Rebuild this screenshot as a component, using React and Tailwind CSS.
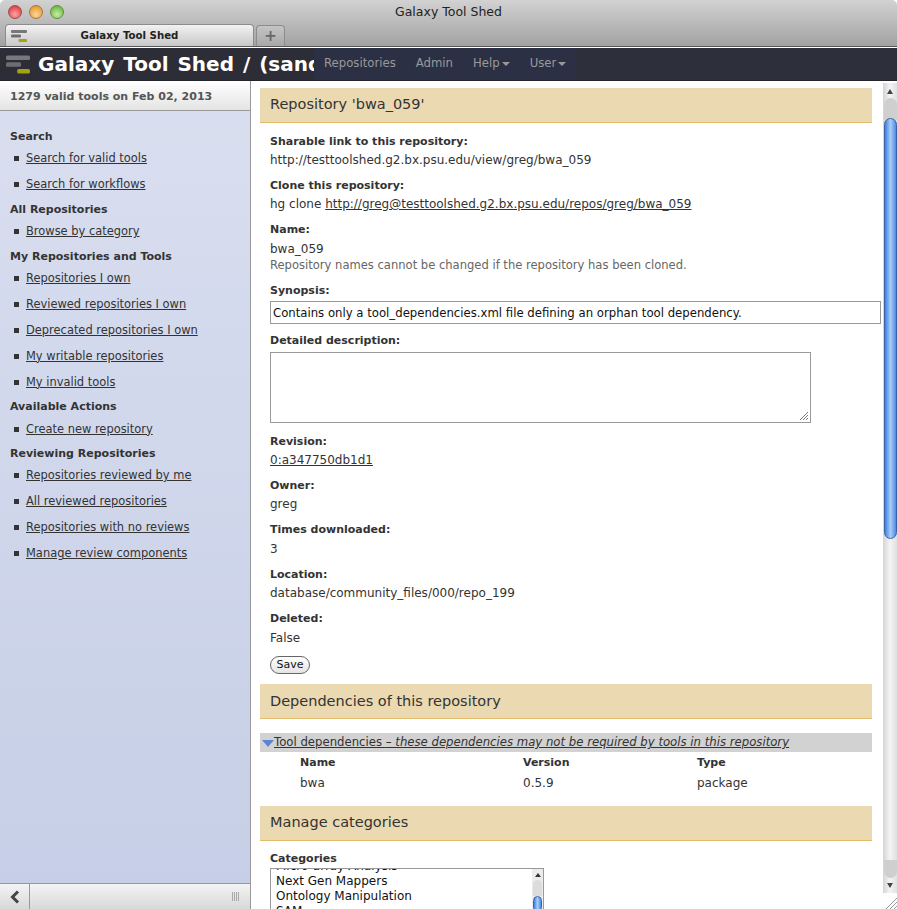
import React from "react";

const sections = [
  { title: "Search", links: ["Search for valid tools", "Search for workflows"] },
  { title: "All Repositories", links: ["Browse by category"] },
  {
    title: "My Repositories and Tools",
    links: [
      "Repositories I own",
      "Reviewed repositories I own",
      "Deprecated repositories I own",
      "My writable repositories",
      "My invalid tools",
    ],
  },
  { title: "Available Actions", links: ["Create new repository"] },
  {
    title: "Reviewing Repositories",
    links: [
      "Repositories reviewed by me",
      "All reviewed repositories",
      "Repositories with no reviews",
      "Manage review components",
    ],
  },
];

// galaxy logo: two grey bars and the small yellow one
const Logo = ({ w, h }) => (
  <svg width={w} height={h} viewBox="0 0 32 26">
    <rect x="0" y="1" width="32" height="6" rx="2" fill="#77777c" />
    <rect x="0" y="10" width="20" height="6" rx="2" fill="#6e6e72" />
    <rect x="15" y="19" width="17" height="6" rx="2" fill="#a3a312" />
  </svg>
);

const Light = ({ className }) => (
  <span className={`w-[14px] h-[14px] rounded-full border ${className}`} />
);

const Field = ({ label, children, className = "" }) => (
  <div className={`px-[10px] ${className}`}>
    <div className="font-bold text-[11px] leading-[18px] text-[#333]">{label}</div>
    {children}
  </div>
);

const SectionTitle = ({ children, className = "" }) => (
  <div
    className={`h-[35px] pl-[10px] flex items-center bg-[#ebd9b2] border-b border-[#e3bb6a] text-[14.5px] text-[#333] ${className}`}
  >
    {children}
  </div>
);

const Thumb = ({ className }) => (
  <div
    className={`rounded-full border border-[#3a62a8] bg-gradient-to-r from-[#3f7fe0] via-[#a9cdf7] to-[#4b8be4] ${className}`}
  />
);

export default function App() {
  return (
    <div
      className="w-[897px] h-[909px] overflow-hidden flex flex-col text-[12px] text-[#333] bg-white"
      style={{ fontFamily: '"DejaVu Sans", sans-serif' }}
    >
      {/* browser chrome, white line under it */}
      <div className="h-[48px] shrink-0 bg-white">
        <div className="h-[47px] flex flex-col rounded-t-[5px] bg-gradient-to-b from-[#d2d2d2] to-[#a2a2a2] border-b border-b-[#55555a]">
          <div className="h-[24px] relative flex items-center pl-[8px] gap-[7px]">
            <Light className="border-[#a04a4a] bg-[radial-gradient(circle_at_50%_70%,#f7a5a5,#d8282c)]" />
            <Light className="border-[#a07a40] bg-[radial-gradient(circle_at_50%_70%,#f9d79a,#e58a14)]" />
            <Light className="border-[#5f9040] bg-[radial-gradient(circle_at_50%_70%,#c9eba6,#5aae28)]" />
            <div className="absolute inset-0 flex items-center justify-center text-[12.5px] text-[#222]">
              Galaxy Tool Shed
            </div>
          </div>
          <div className="h-[22px] flex items-end pl-[5px] gap-[2px]">
            <div className="w-[249px] h-[22px] relative flex items-center justify-center rounded-t-[4px] border border-b-0 border-[#8c8c8c] bg-gradient-to-b from-[#f2f2f2] to-[#c8c8c8] text-[10.2px] font-bold text-[#222]">
              <span className="absolute left-[5px] top-[4px]">
                <Logo w={16} h={14} />
              </span>
              Galaxy Tool Shed
            </div>
            <div className="w-[29px] h-[21px] flex items-center justify-center rounded-t-[4px] border border-b-0 border-[#8c8c8c] bg-gradient-to-b from-[#c4c4c4] to-[#a8a8a8] text-[15px] font-bold leading-none text-[#666]">
              +
            </div>
          </div>
        </div>
      </div>

      {/* masthead */}
      <div className="h-[33px] shrink-0 flex bg-[#2d303a] border-b border-[#23252c]">
        <div className="w-[314px] shrink-0 flex items-center pl-[6px] gap-[8px] overflow-hidden bg-[#2c2d36]">
          <span className="shrink-0 flex">
            <Logo w={24} h={21} />
          </span>
          <span className="whitespace-nowrap font-bold text-[20px] text-white [word-spacing:2px]">
            Galaxy Tool Shed / (sandbox)
          </span>
        </div>
        <nav className="w-[262px] shrink-0 flex items-center pl-[10px] gap-[20px] bg-[#2c3044] text-[11.7px] text-[#9a9a9a]">
          <span>Repositories</span>
          <span>Admin</span>
          <span className="flex items-center gap-[2px]">
            Help
            <span className="border-x-[4px] border-x-transparent border-t-[4px] border-t-[#9a9a9a]" />
          </span>
          <span className="flex items-center gap-[2px]">
            User
            <span className="border-x-[4px] border-x-transparent border-t-[4px] border-t-[#9a9a9a]" />
          </span>
        </nav>
      </div>

      <div className="flex-1 min-h-0 flex">
        {/* left panel */}
        <aside className="w-[251px] shrink-0 flex flex-col border-r border-[#999]">
          <div className="h-[30px] shrink-0 flex items-center pl-[10px] pt-[3px] font-bold text-[11px] text-[#555] border-b border-[#999] bg-gradient-to-b from-white to-[#e4e4e4]">
            1279 valid tools on Feb 02, 2013
          </div>
          <div className="flex-1 min-h-0 pl-[10px] pt-[17px] bg-gradient-to-b from-[#d9deef] to-[#c6cfe7]">
            {sections.map((s) => (
              <div key={s.title} className="mb-[7px]">
                <div className="font-bold text-[11px] leading-[18px] mb-[3.8px]">{s.title}</div>
                <ul>
                  {s.links.map((l) => (
                    <li key={l} className="flex items-center h-[18px] mb-[8px] last:mb-0 pl-[4px] text-[11.45px]">
                      <span className="w-[5px] h-[5px] bg-[#333] mr-[7px]" />
                      <a className="underline">{l}</a>
                    </li>
                  ))}
                </ul>
              </div>
            ))}
          </div>
          <div className="h-[26px] shrink-0 flex border-t border-[#999] bg-gradient-to-b from-[#f4f4f4] to-[#d8d8d8]">
            <div className="w-[30px] flex items-center justify-center border-r border-[#999]">
              <svg width="10" height="14" viewBox="0 0 10 14">
                <path d="M8 1.5 2.5 7 8 12.5" fill="none" stroke="#444" strokeWidth="3" />
              </svg>
            </div>
            <div className="flex-1 flex items-center justify-end pr-[11px]">
              <span className="w-[7px] h-[9px] bg-[repeating-linear-gradient(90deg,#aaa_0,#aaa_1px,transparent_1px,transparent_2px)]" />
            </div>
          </div>
        </aside>

        {/* center panel */}
        <main className="flex-1 min-w-0 overflow-hidden pl-[9px] pr-[11px] pt-[7px]">
          <SectionTitle>Repository 'bwa_059'</SectionTitle>
          <Field label="Sharable link to this repository:" className="mt-[10px]">
            <div className="leading-[18px]">http://testtoolshed.g2.bx.psu.edu/view/greg/bwa_059</div>
          </Field>
          <Field label="Clone this repository:" className="mt-[8px]">
            <div className="leading-[18px]">
              hg clone <a className="underline">http://greg@testtoolshed.g2.bx.psu.edu/repos/greg/bwa_059</a>
            </div>
          </Field>
          <Field label="Name:" className="mt-[8px]">
            <div className="leading-[18px] pt-[1px] h-[18px]">bwa_059</div>
            <div className="leading-[16px] text-[11.55px] text-[#666]">Repository names cannot be changed if the repository has been cloned.</div>
          </Field>
          <Field label="Synopsis:" className="mt-[9px]">
            <div className="h-[23px] mt-[1px] -mr-[19px] flex items-center px-[2px] pt-[2px] border border-[#999] text-[11.7px] text-[#111] whitespace-nowrap">
              Contains only a tool_dependencies.xml file defining an orphan tool dependency.
            </div>
          </Field>
          <Field label="Detailed description:" className="mt-[8px]">
            <div className="w-[541px] h-[71px] mt-[2px] relative border border-[#999]">
              <svg className="absolute right-[1px] bottom-[1px]" width="11" height="11" viewBox="0 0 11 11">
                <path d="M10 2 2 10M10 5 5 10M10 8 8 10" stroke="#777" strokeWidth="1" />
              </svg>
            </div>
          </Field>
          <Field label="Revision:" className="mt-[10px]">
            <div className="leading-[18px]"><a className="underline">0:a347750db1d1</a></div>
          </Field>
          <Field label="Owner:" className="mt-[8px]">
            <div className="leading-[18px]">greg</div>
          </Field>
          <Field label="Times downloaded:" className="mt-[8px]">
            <div className="leading-[20px]">3</div>
          </Field>
          <Field label="Location:" className="mt-[7px]">
            <div className="leading-[18px]">database/community_files/000/repo_199</div>
          </Field>
          <Field label="Deleted:" className="mt-[8px]">
            <div className="leading-[20px]">False</div>
          </Field>
          <div className="px-[10px] mt-[8px]">
            <button className="h-[18px] w-[40px] flex items-center justify-center rounded-full border border-[#666] bg-gradient-to-b from-white to-[#e4e4e4] text-[11px] text-[#111]">
              Save
            </button>
          </div>
          <SectionTitle className="mt-[10px] pt-[2px]">Dependencies of this repository</SectionTitle>
          <div className="h-[19px] mt-[14px] flex items-center pl-[2px] pt-[1px] bg-[#d2d2d2]">
            <span className="w-0 h-0 border-x-[6px] border-x-transparent border-t-[7px] border-t-[#5b86d8]" />
            <a className="underline whitespace-nowrap text-[11.7px]">
              Tool dependencies <i>– these dependencies may not be required by tools in this repository</i>
            </a>
          </div>
          <div className="grid grid-cols-[223px_174px_1fr] pl-[40px] mt-[1px] leading-[20px]">
            <div className="font-bold text-[11px]">Name</div>
            <div className="font-bold text-[11px]">Version</div>
            <div className="font-bold text-[11px]">Type</div>
            <div>bwa</div>
            <div>0.5.9</div>
            <div>package</div>
          </div>
          <SectionTitle className="mt-[13px]">Manage categories</SectionTitle>
          <div className="px-[10px] mt-[9px]">
            <div className="font-bold text-[11px] leading-[18px]">Categories</div>
            <div className="w-[274px] h-[60px] flex border border-[#999] overflow-hidden">
              <div className="flex-1 -mt-[10px] pl-[5px] leading-[15px] text-[#111]">
                <div>Micro-array Analysis</div>
                <div>Next Gen Mappers</div>
                <div>Ontology Manipulation</div>
                <div>SAM</div>
              </div>
              <div className="w-[11px] flex flex-col items-center bg-[#ececec]">
                <span className="mt-[4px] border-x-[3px] border-x-transparent border-b-[4px] border-b-[#333]" />
                <div className="w-[9px] h-[16px] mt-[3px] rounded-t-full bg-[#dcdcdc]" />
                <Thumb className="w-[9px] h-[16px]" />
              </div>
            </div>
          </div>
        </main>

        {/* page scrollbar + window grip */}
        <div className="w-[14px] shrink-0 pt-[2px] flex flex-col">
          <div className="flex-1 min-h-0 flex flex-col items-center bg-gradient-to-r from-[#d4d4d4] via-[#f4f4f4] to-[#e0e0e0]">
            <span className="mt-[6px] border-x-[3px] border-x-transparent border-b-[5px] border-b-[#444]" />
            <div className="w-[13px] h-[22px] mt-[4px] rounded-t-full bg-[#cfcfcf]" />
            <Thumb className="w-[13px] h-[421px] -mt-[2px]" />
            <div className="flex-1" />
            <div className="w-[13px] h-[18px] rounded-b-full bg-[#cfcfcf]" />
            <span className="mt-[5px] mb-[5px] border-x-[3px] border-x-transparent border-t-[5px] border-t-[#444]" />
          </div>
          <div className="h-[16px] shrink-0 flex items-end justify-end">
            <svg width="12" height="12" viewBox="0 0 12 12">
              <path d="M12 1 1 12M12 5 5 12M12 9 9 12" stroke="#999" strokeWidth="1" />
            </svg>
          </div>
        </div>
      </div>
    </div>
  );
}
